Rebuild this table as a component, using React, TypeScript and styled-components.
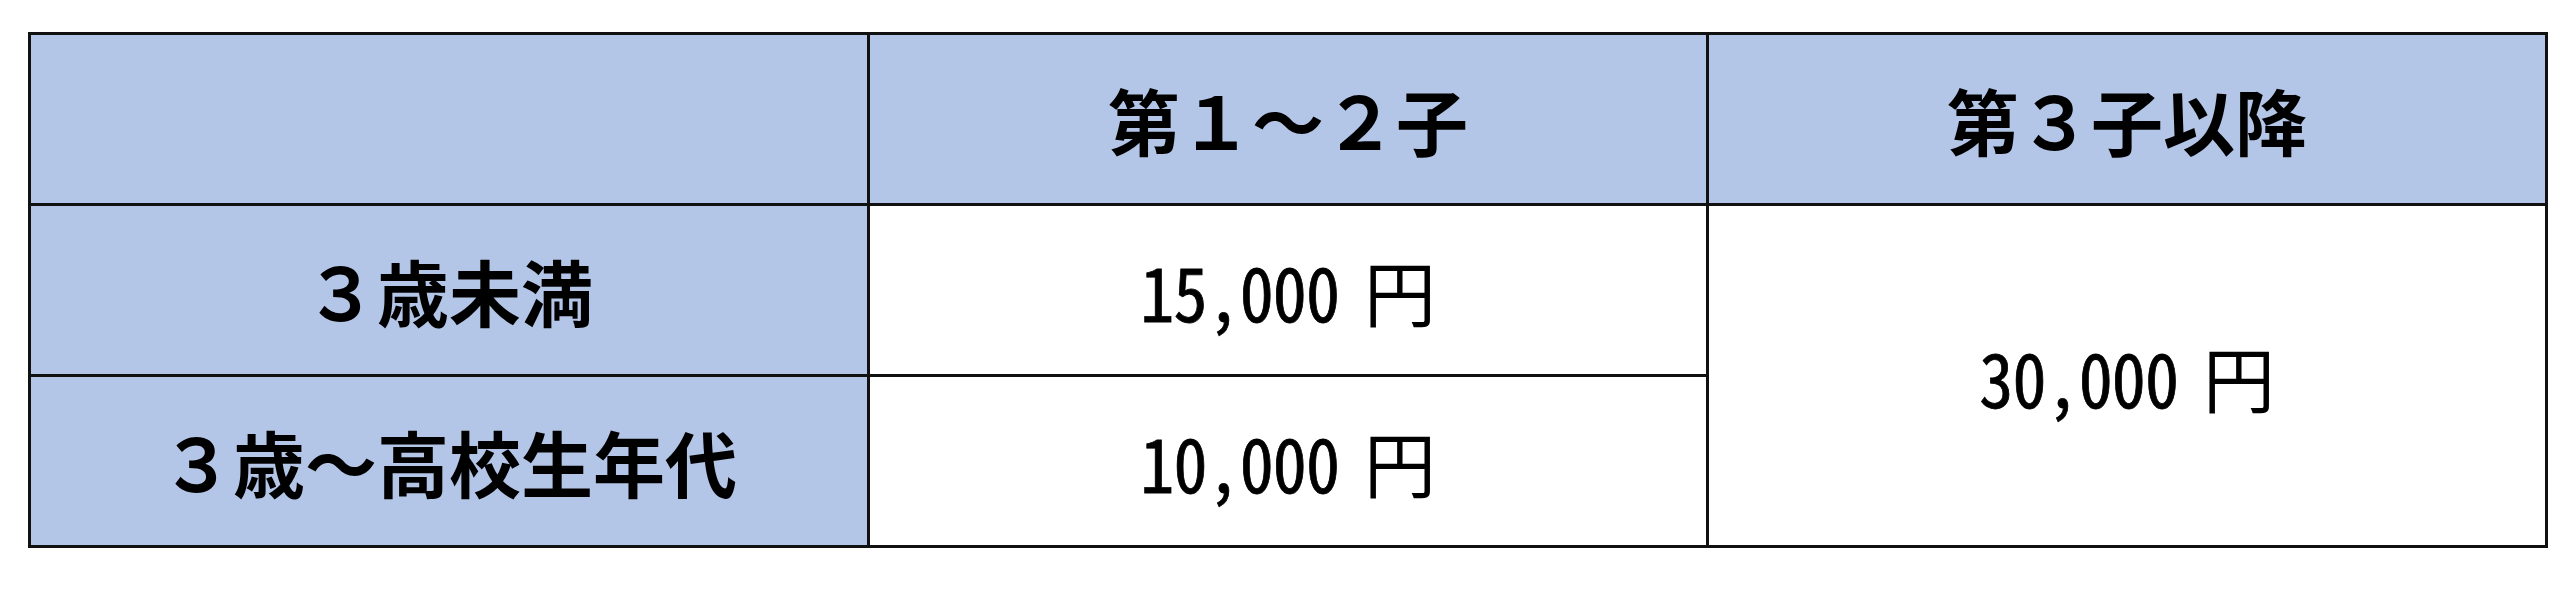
import React from "react";
import styled, { createGlobalStyle } from "styled-components";

const GlobalStyle = createGlobalStyle`
  html, body {
    margin: 0;
    padding: 0;
    background: #ffffff;
  }
  body {
    font-family: "Noto Sans CJK JP", "Noto Sans", sans-serif;
    color: #000000;
  }
`;

const Page = styled.div`
  width: 2560px;
  height: 589px;
  box-sizing: border-box;
  padding: 32px 0 0 28px;
  background: #ffffff;
`;

// the black background shows through the gaps and padding as the ruling lines
const Table = styled.div`
  display: grid;
  grid-template-columns: repeat(3, 836px);
  grid-template-rows: repeat(3, 168px);
  gap: 3px;
  padding: 3px;
  width: max-content;
  background: #111111;
`;

const Cell = styled.div<{ $head?: boolean; $rows?: number }>`
  display: flex;
  align-items: center;
  justify-content: center;
  grid-row: span ${({ $rows }) => $rows ?? 1};
  background: ${({ $head }) => ($head ? "#b4c6e7" : "#ffffff")};
  font-size: 72px;
  line-height: 1;
  font-weight: ${({ $head }) => ($head ? 700 : 400)};
  white-space: pre;
`;

const Amount = styled.span`
  display: inline-flex;
  align-items: center;
`;

// half-width figures, narrowed a little to match the condensed digits
const Digits = styled.span`
  display: inline-block;
  font-size: 74px;
  font-feature-settings: "hwid" 1;
  letter-spacing: -1px;
  transform: scaleX(0.92);
  transform-origin: right center;
  margin-left: -17px;
  -webkit-text-stroke: 0.8px #000;
`;

const Yen = styled.span`
  margin-left: 25px;
`;

const rows = [
  { label: "３歳未満", amount: "15,000" },
  { label: "３歳～高校生年代", amount: "10,000" },
];

const Money = ({ value }: { value: string }) => (
  <Amount>
    <Digits>{value}</Digits>
    <Yen>円</Yen>
  </Amount>
);

export default function App() {
  return (
    <>
      <GlobalStyle />
      <Page>
        <Table>
          <Cell $head />
          <Cell $head>第１～２子</Cell>
          <Cell $head>第３子以降</Cell>

          <Cell $head>{rows[0].label}</Cell>
          <Cell>
            <Money value={rows[0].amount} />
          </Cell>
          <Cell $rows={2}>
            <Money value="30,000" />
          </Cell>

          <Cell $head>{rows[1].label}</Cell>
          <Cell>
            <Money value={rows[1].amount} />
          </Cell>
        </Table>
      </Page>
    </>
  );
}
